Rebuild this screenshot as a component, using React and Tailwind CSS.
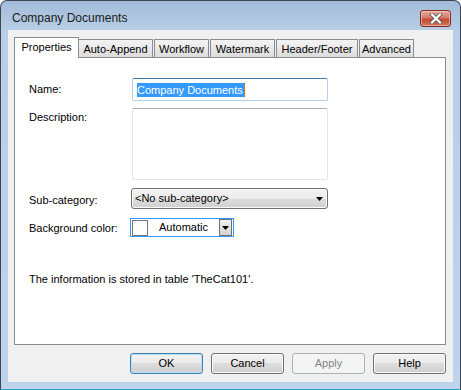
import React from "react";

function Tab({ label, width, selected, first }) {
  if (selected) {
    return (
      <div
        className="h-[21px] -mb-px bg-white border border-b-0 border-[#898c95] flex items-center justify-center pb-[1px]"
        style={{ width }}
      >
        {label}
      </div>
    );
  }
  return (
    <div
      className={`h-[18px] border border-b-0 border-[#898c95] bg-[linear-gradient(to_bottom,#f3f3f3,#e9e9e9_50%,#dcdcdc)] flex items-center justify-center pt-[2px] ${first ? "border-l-0" : "ml-px"}`}
      style={{ width }}
    >
      {label}
    </div>
  );
}

function Button({ children, variant }) {
  if (variant === "disabled") {
    return (
      <div className="w-[73px] h-[21px] rounded-[3px] border border-[#adb2b5] bg-[#f4f4f4] text-[#838383] flex items-center justify-center">
        {children}
      </div>
    );
  }
  const border = variant === "default" ? "border-[#3c7fb1] shadow-[inset_0_0_0_1px_#b6e1f8]" : "border-[#707070] shadow-[inset_0_0_0_1px_#fcfcfc]";
  return (
    <div
      className={`w-[73px] h-[21px] rounded-[3px] border ${border} bg-[linear-gradient(to_bottom,#f2f2f2,#ebebeb_50%,#dddddd_50%,#cfcfcf)] flex items-center justify-center`}
    >
      {children}
    </div>
  );
}

function Arrow() {
  return (
    <svg width="7" height="4" viewBox="0 0 7 4">
      <path d="M0 0 H7 L3.5 4 Z" fill="#000" />
    </svg>
  );
}

export default function App() {
  return (
    <div className="w-[461px] h-[390px] font-['Liberation_Sans',Arial,sans-serif] text-[11px] text-black">
      <div className="h-full flex flex-col rounded-t-[7px] border border-[#3d4752] border-b-[#2a9fbd] bg-[linear-gradient(to_bottom,#a3bcd9_0px,#b8cee6_30px,#bdd4ec_100%)]">
        {/* Title bar */}
        <div className="h-[29px] flex items-start pl-[11px] pr-[9px]">
          <div className="flex-1 mt-[10px] text-[12px] leading-[15px] text-[#1b1b1b]">
            Company Documents
          </div>
          <div className="mt-[9px] w-[31px] h-[17px] rounded-[3px] border border-[#7d2e22] bg-[linear-gradient(to_bottom,#e6aa9a,#d27d68_45%,#c34a33_55%,#d5755e)] flex items-center justify-center shadow-[inset_0_0_0_1px_rgba(255,220,210,0.5)]">
            <svg width="14" height="11" viewBox="0 0 14 11">
              <path d="M3 1.5 L11 9.5 M11 1.5 L3 9.5" stroke="#6b5a58" strokeWidth="4" strokeLinecap="square" />
              <path d="M3 1.5 L11 9.5 M11 1.5 L3 9.5" stroke="#ffffff" strokeWidth="2.2" strokeLinecap="square" />
            </svg>
          </div>
        </div>

        {/* Client area */}
        <div className="flex-1 mx-[7px] mb-[7px] bg-[#f0f0f0] flex flex-col pt-[7px] pl-[6px] pr-[7px]">
          {/* Tabs */}
          <div className="h-[20px] flex items-end relative z-10">
            <Tab label="Properties" width={65} selected />
            <Tab label="Auto-Append" width={74} first />
            <Tab label="Workflow" width={55} />
            <Tab label="Watermark" width={65} />
            <Tab label="Header/Footer" width={82} />
            <Tab label="Advanced" width={55} />
          </div>

          {/* Page */}
          <div className="h-[288px] bg-white border border-[#898c95] pl-[14px] pt-[20px] flex flex-col">
            {/* Name */}
            <div className="flex items-center h-[23px]">
              <div className="w-[103px] -mt-[1px]">Name:</div>
              <div className="w-[196px] h-[23px] rounded-[2px] border border-[#b5cfe7] border-t-[#3d7bad] flex items-center pl-[4px]">
                <span className="bg-[#3399ff] text-white leading-[14px] h-[14px] pr-[1px]">Company Documents</span>
                <span className="w-px h-[14px] bg-[#c8781e]"></span>
              </div>
            </div>

            {/* Description */}
            <div className="flex mt-[7px]">
              <div className="w-[103px] pt-[1px]">Description:</div>
              <div className="w-[196px] h-[72px] rounded-[2px] border border-[#e2e6eb] border-t-[#abadb3]"></div>
            </div>

            {/* Sub-category */}
            <div className="flex items-center mt-[8px]">
              <div className="w-[102px] pt-[3px]">Sub-category:</div>
              <div className="w-[197px] h-[21px] rounded-[3px] border border-[#707070] bg-[linear-gradient(to_bottom,#f2f2f2,#ebebeb_50%,#dddddd_50%,#cfcfcf)] shadow-[inset_0_0_0_1px_#fafafa] flex items-center pl-[3px] pr-[4px]">
                <span className="flex-1">&lt;No sub-category&gt;</span>
                <Arrow />
              </div>
            </div>

            {/* Background color */}
            <div className="flex items-center mt-[9px]">
              <div className="w-[101px] pt-[1px]">Background color:</div>
              <div className="w-[104px] h-[19px] border border-[#3399ff] bg-white flex items-center pl-px pr-px">
                <div className="w-[16px] h-[16px] border border-[#767676] bg-white"></div>
                <div className="flex-1 text-center">Automatic</div>
                <div className="w-[13px] h-[17px] border border-[#707070] bg-[linear-gradient(to_bottom,#f0f0f0,#d4d4d4)] flex items-center justify-center">
                  <Arrow />
                </div>
              </div>
            </div>

            <div className="mt-[36px] leading-[13px]">The information is stored in table 'TheCat101'.</div>
          </div>

          {/* Buttons */}
          <div className="mt-[8px] flex justify-end gap-[8px]">
            <Button variant="default">OK</Button>
            <Button>Cancel</Button>
            <Button variant="disabled">Apply</Button>
            <Button>Help</Button>
          </div>
        </div>
      </div>
    </div>
  );
}
